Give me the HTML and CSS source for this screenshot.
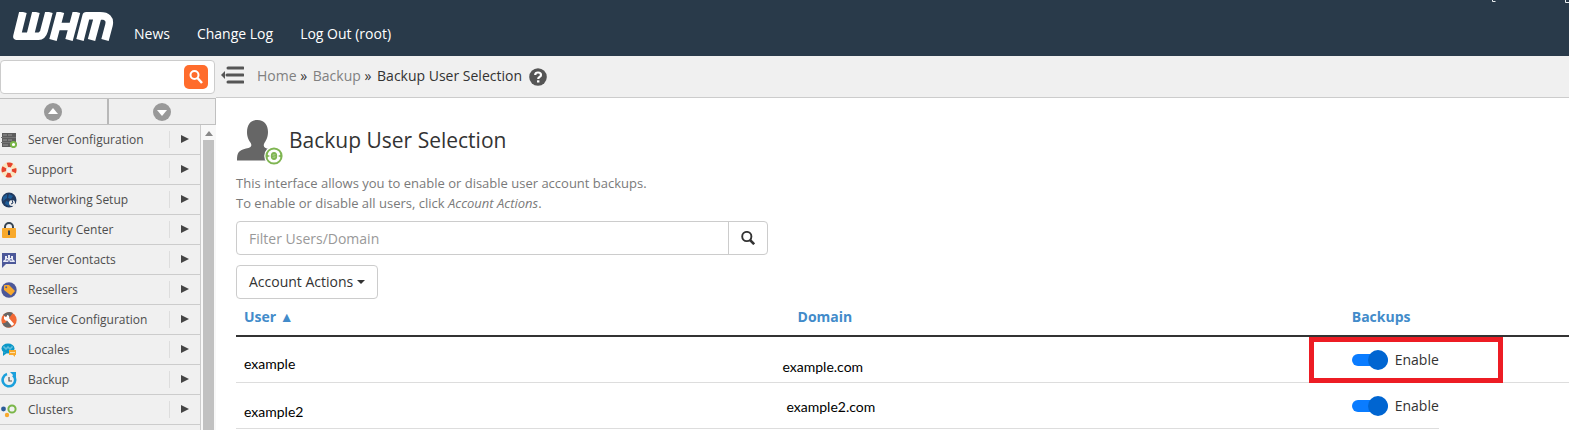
FILE: index.html
```html
<!DOCTYPE html>
<html lang="en">
<head>
<meta charset="utf-8">
<title>Backup User Selection</title>
<link rel="stylesheet" href="styles.css">
</head>
<body>
<header class="topbar">
  <svg class="logo" viewBox="0 0 102 30" role="img" aria-label="WHM" fill="none" stroke="#fff" stroke-width="7.600" stroke-linejoin="round">
    <path d="M11 0 5 24.200H26.500Q30.500 24.200 32 19L37 0M24 0 18 24.200"/>
    <path d="M48.500 0 41 28M64.500 0 57 28M45 14.500H61"/>
    <path d="M68 28 74.200 3.800H88Q99 3.800 97 13L93 28M86 4 79.500 28"/>
  </svg>
  <nav class="topnav">
    <a href="#">News</a>
    <a href="#">Change Log</a>
    <a href="#">Log Out (root)</a>
  </nav>
  <svg class="topbar-marks" viewBox="0 0 78 3" aria-hidden="true"><path d="M1.500 0V1.500H4.500M74.500 0V2.500H78" fill="none" stroke="#e8ecef"/></svg>
</header>
<div class="shell">
  <aside class="sidebar">
    <form class="quickfind">
      <input class="quickfind-input" type="text" aria-label="Search menu">
      <button class="quickfind-btn" type="button" aria-label="Search">
        <svg width="16" height="16" viewBox="0 0 16 16" fill="none" stroke="#fff"><circle cx="6.500" cy="6" r="4" stroke-width="2"/><path d="m9.500 9 4.500 5" stroke-width="2.500"/></svg>
      </button>
    </form>
    <div class="expanders">
      <button type="button" aria-label="Collapse all"><svg width="18" height="18" viewBox="0 0 18 18"><circle cx="9" cy="9" r="9" fill="#999"/><path d="m9 5 5 6H4z" fill="#fff"/></svg></button>
      <button type="button" aria-label="Expand all"><svg width="18" height="18" viewBox="0 0 18 18"><circle cx="9" cy="9" r="9" fill="#999"/><path d="m9 13 5-6H4z" fill="#fff"/></svg></button>
    </div>
    <div class="menu-wrap">
      <ul class="menu">
        <li><svg viewBox="0 0 16 16"><path d="M1 1h14v4H1zM1 6h14v4H1zM1 11h14v4H1z" fill="#5d5d5d"/><path d="M0 5.500h15M0 10.500h15" stroke="#777"/><path d="M2 3h4m1 0h4M2 8h4m1 0h4M2 13h5" stroke="#999"/><circle cx="12.500" cy="12.500" r="2.600" fill="#fff" stroke="#7ab648" stroke-width="2"/></svg><a href="#">Server Configuration</a><i></i></li>
        <li><svg viewBox="0 0 16 16"><circle cx="8" cy="8" r="5.200" fill="none" stroke="#fbe6c0" stroke-width="5"/><circle cx="8" cy="8" r="5.200" fill="none" stroke="#e5432d" stroke-width="4.600" stroke-dasharray="4.600 3.568" stroke-dashoffset="2.300"/></svg><a href="#">Support</a><i></i></li>
        <li><svg viewBox="0 0 16 16"><circle cx="8" cy="8" r="7.500" fill="#203a60"/><path d="M2 5 6 2v4l-4 3zM8 2l4 2-2 3-3-1zM5 9l3 1v4l-4-2z" fill="#1e5d98"/><circle cx="11" cy="11" r="3" fill="#eee"/><path d="m11 11 4 4" stroke="#eee" stroke-width="2"/><path d="m11 8 1 3-2 1" fill="none" stroke="#203a60"/></svg><a href="#">Networking Setup</a><i></i></li>
        <li><svg viewBox="0 0 16 16"><path d="M4 7V5a4 4 0 0 1 8 0v2" fill="none" stroke="#344352" stroke-width="2"/><rect x="1" y="6" width="14" height="10" rx="1" fill="#f8a92c"/><path d="M8 8.500v4.500M7 9.500h2" stroke="#344352" stroke-width="2"/></svg><a href="#">Security Center</a><i></i></li>
        <li><svg viewBox="0 0 16 16"><path d="M1 1h14v11H5l-4 4z" fill="#4c5899"/><path d="M2 10q0-2 2-2.500V4h2v2h1V3h2v3h1V4h2v3.500q2 .5 2 2.500z" fill="#e8eaf5"/><path d="m5 9 1-2 2 3 2-3 1 2" fill="none" stroke="#4c5899" stroke-width=".7"/></svg><a href="#">Server Contacts</a><i></i></li>
        <li><svg viewBox="0 0 16 16"><circle cx="8" cy="8" r="7.700" fill="#4c5899"/><path d="M3 4q0-1 1-1h4l6 6-4 4.500-7-5.500z" fill="#f8a92c"/><circle cx="5.200" cy="5.200" r="1" fill="#4c5899"/></svg><a href="#">Resellers</a><i></i></li>
        <li><svg viewBox="0 0 16 16"><circle cx="8" cy="8" r="7.700" fill="#f26935"/><path d="M2 3a8 8 0 0 1 10-2L8 6z" fill="#666"/><path d="M1 11q4 1 5-3l5 6q-4 3-8 0z" fill="#666"/><path d="m5 5 7 8" stroke="#fff" stroke-width="3"/><path d="M3 7V4l3 2V3q3 0 2 4l-3 2z" fill="#fff"/></svg><a href="#">Service Configuration</a><i></i></li>
        <li><svg viewBox="0 0 16 16"><ellipse cx="7" cy="6.500" rx="6.500" ry="5" fill="#0b98c8"/><path d="m2 10 0 4 4-3z" fill="#0b98c8"/><path d="M2 5h2v2h2V5h2v2h2V5h2" fill="none" stroke="#bee6f3" stroke-width=".6"/><path d="M8 8h7v5h-1v2l-2-2H8z" fill="#f8a92c"/><path d="M9 10.500h5" stroke="#fce0af"/></svg><a href="#">Locales</a><i></i></li>
        <li><svg viewBox="0 0 16 16"><path d="M6 2a6.300 6.300 0 1 0 6 1.200" fill="none" stroke="#1ba0dc" stroke-width="2.600"/><path d="M9 0h6v6z" fill="#1ba0dc"/><path d="M8 5v4h3" fill="none" stroke="#555" stroke-width="1.200"/></svg><a href="#">Backup</a><i></i></li>
        <li><svg viewBox="0 0 16 16"><circle cx="2.500" cy="7" r="2.400" fill="#2c5c99"/><circle cx="11" cy="7" r="3.600" fill="none" stroke="#7ab648" stroke-width="2"/><circle cx="6" cy="13" r="2.200" fill="#f8a92c"/></svg><a href="#">Clusters</a><i></i></li>
        <li></li>
      </ul>
      <div class="scrollbar" aria-hidden="true"><svg width="8" height="5" viewBox="0 0 8 5"><path d="m4 0 4 5H0z" fill="#888"/></svg><div class="thumb"></div></div>
    </div>
  </aside>
  <main class="main">
    <div class="crumbbar">
      <button class="toggle-menu" type="button" aria-label="Toggle menu"><svg width="23" height="18" viewBox="0 0 23 18"><path d="M0 9l4-4v8z" fill="#555"/><path d="M7 2h15M6 9h16M7 16h15" stroke="#555" stroke-width="3" stroke-linecap="round"/></svg></button>
      <nav class="crumbs" aria-label="Breadcrumb"><a href="#">Home</a> » <a class="step" href="#">Backup</a> » <span class="step">Backup User Selection</span></nav>
      <svg class="help" width="18" height="18" viewBox="0 0 18 18" role="img" aria-label="Help"><circle cx="9" cy="9" r="8.800" fill="#555"/><path d="M6.200 7Q6.200 4.500 9 4.500 12 4.500 12 6.900 12 8.200 10.500 8.900 9.200 9.500 9.200 11" fill="none" stroke="#fff" stroke-width="2.200"/><path d="M8 12.300h2.400v2.200H8z" fill="#fff"/></svg>
    </div>
    <div class="content">
      <div class="page-title">
        <svg width="48" height="46" viewBox="0 0 48 46" aria-hidden="true"><path d="M21.500 0C28.500 0 32 5 32 12c0 6-2.500 9-4 12-1 3 1 4 5 5 7 2 8 4 8 11.500H1C1 32 3 30.500 10 28.500c5-1 6-2 5-5-2-3-4-6-4-11.500C11 5 14.500 0 21.500 0z" fill="#666"/><circle cx="38" cy="36" r="9.800" fill="#fff"/><circle cx="38" cy="36" r="7.600" fill="none" stroke="#7fb552" stroke-width="2"/><path d="m30 34 4 2-4 2zM46 34l-4 2 4 2z" fill="#7fb552"/><ellipse cx="38" cy="36" rx="3.200" ry="4" fill="#7fb552"/><path d="M39.500 34.500h-2.500V36h2v1.500h-2.500" fill="none" stroke="#b5d49b" stroke-width=".6"/></svg>
        <h1>Backup User Selection</h1>
      </div>
      <p class="intro">This interface allows you to enable or disable user account backups.<br>To enable or disable all users, click <em>Account Actions</em>.</p>
      <form class="filter">
        <input type="text" placeholder="Filter Users/Domain" aria-label="Filter Users/Domain">
        <button type="button" aria-label="Filter"><svg width="14" height="14" viewBox="0 0 14 14" fill="none" stroke="#333"><circle cx="5.800" cy="5.500" r="4.600" stroke-width="1.900"/><path d="m9 9 4.200 4.200" stroke-width="2.600"/></svg></button>
      </form>
      <button class="actions" type="button">Account Actions <span class="caret"></span></button>
      <table class="users">
        <thead><tr><th class="col-user" scope="col">User ▲</th><th class="col-domain" scope="col">Domain</th><th scope="col">Backups</th></tr></thead>
        <tbody>
          <tr><td class="user">example</td><td class="domain">example.com</td><td class="state"><div class="highlight"></div><label><input type="checkbox" role="switch" checked>Enable</label></td></tr>
          <tr class="last"><td class="user">example2</td><td class="domain">example2.com</td><td class="state"><label><input type="checkbox" role="switch" checked>Enable</label></td></tr>
        </tbody>
      </table>
    </div>
  </main>
</div>
</body>
</html>
```
FILE: styles.css
```css
* { box-sizing: border-box; }
body {
  margin: 0;
  height: 100vh;
  overflow: hidden;
  display: flex;
  flex-direction: column;
  font: 14px/20px "Open Sans", "Noto Sans", sans-serif;
  color: #333;
  background: #fff;
}
a { color: inherit; text-decoration: none; }
button { font: inherit; color: inherit; cursor: pointer; padding: 0; }

.topbar {
  flex: none;
  height: 56px;
  display: flex;
  align-items: flex-start;
  padding-left: 12px;
  background: #293a4a;
  color: #fff;
}
.logo { width: 102px; height: 30px; margin-top: 12px; }
.topnav { display: flex; gap: 27px; margin: 24px 0 0 20px; }
.topbar-marks { width: 78px; height: 3px; margin-left: auto; }

.shell { flex: 1; min-height: 0; display: flex; }
.sidebar {
  flex: none;
  width: 216px;
  display: flex;
  flex-direction: column;
  background: #f0f0f0;
}
.quickfind {
  flex: none;
  display: flex;
  align-items: center;
  height: 34px;
  margin: 4px 1px 4px 0;
  padding-right: 6px;
  background: #fff;
  border: 1px solid #ccc;
  border-radius: 4px;
}
.quickfind-input { flex: 1; min-width: 0; border: 0; outline: 0; background: none; }
.quickfind-btn {
  display: grid;
  place-items: center;
  width: 24px;
  height: 24px;
  border: 0;
  border-radius: 5px;
  background: #ff6c2c;
}
.expanders {
  flex: none;
  display: flex;
  height: 27px;
  border: 1px solid #c0c0c0;
  border-left: 0;
}
.expanders button {
  flex: 1;
  display: grid;
  place-items: center;
  border: 0;
  background: #efefef;
}
.expanders button + button { border-left: 2px solid #b8b8b8; }
.menu-wrap { flex: 1; min-height: 0; display: flex; background: #f8f8f8; }
.menu {
  flex: 1;
  margin: 0;
  padding: 0;
  list-style: none;
  overflow: hidden;
  font-size: 12px;
  color: #4d4d4d;
  background: #f0f0f0;
  border-right: 1px solid #ccc;
}
.menu li {
  display: flex;
  align-items: center;
  height: 30px;
  padding-right: 11px;
  border-bottom: 1px solid #ccc;
}
.menu svg { width: 16px; height: 16px; margin: 0 11px 0 1px; }
.menu a { flex: 1; }
.menu i {
  display: flex;
  align-items: center;
  height: 17px;
  padding-left: 11px;
  border-left: 1px solid #ddd;
}
.menu i::before {
  content: "";
  margin-bottom: 1px;
  border: 4px solid transparent;
  border-left: 8px solid #444;
  border-right: 0;
}
.scrollbar {
  width: 15px;
  display: flex;
  flex-direction: column;
  align-items: center;
  gap: 4px;
  padding-top: 6px;
}
.thumb { flex: 1; width: 11px; background: #c1c1c1; }

.main { flex: 1; min-width: 0; }
.crumbbar {
  display: flex;
  align-items: center;
  height: 42px;
  padding-left: 5px;
  background: #f0f0f0;
  border-bottom: 1px solid #ccc;
}
.toggle-menu { display: flex; border: 0; background: none; margin: 0 13px 4px 0; }
.crumbs { margin: 0 7px 2px 0; }
.crumbs a { color: #808080; }
.crumbs .step { margin-left: 2px; }
.help { margin-top: 1px; }

.content { padding: 22px 0 0 20px; }
.page-title { display: flex; gap: 5px; height: 53px; }
h1 { margin: 4px 0 0; font-size: 21px; line-height: 32px; font-weight: 400; }
.intro { margin: 0 0 8px; font-size: 13px; color: #7a7a7a; }
.filter {
  display: flex;
  width: 532px;
  max-width: 100%;
  height: 34px;
  border: 1px solid #ccc;
  border-radius: 4px;
}
.filter input {
  flex: 1;
  min-width: 0;
  padding: 2px 12px 0;
  border: 0;
  outline: 0;
  background: none;
  font: inherit;
}
.filter input::placeholder { color: #999; }
.filter button {
  display: grid;
  place-items: center;
  width: 39px;
  border: 0;
  border-left: 1px solid #ccc;
  background: none;
}
.actions {
  display: flex;
  align-items: center;
  gap: 4px;
  height: 34px;
  margin: 10px 0 0;
  padding: 0 12px;
  border: 1px solid #ccc;
  border-radius: 4px;
  background: #fff;
}
.caret { border: 4px solid transparent; border-top-color: #333; border-bottom: 0; }

.users { width: 100%; table-layout: fixed; border-collapse: separate; border-spacing: 0; }
.col-user { width: 40.4%; }
.col-domain { width: 42.7%; }
.users th {
  height: 38px;
  padding: 0 8px;
  text-align: left;
  font-weight: 700;
  color: #428bca;
  border-bottom: 2px solid #333;
}
.users .col-domain { padding-left: 23px; }
.users td {
  height: 46px;
  padding: 0 8px;
  vertical-align: top;
  border-bottom: 1px solid #ddd;
}
.users .user,
.users .domain { font-family: Lato, "Open Sans", sans-serif; color: #000; }
.users .user { padding-top: 17px; }
.users .domain { padding-top: 20px; }
.users .last .user { padding-top: 19px; }
.users .last .domain { padding: 14px 12px 0; }
.users .state { position: relative; padding-top: 13px; }
.state label { display: flex; align-items: center; gap: 7px; }
.state input {
  appearance: none;
  flex: none;
  display: flex;
  justify-content: flex-end;
  align-items: center;
  width: 36px;
  height: 12px;
  margin: 0;
  border-radius: 6px;
  background: #0a7cff;
}
.state input::before {
  content: "";
  width: 20px;
  height: 20px;
  border-radius: 50%;
  background: #0065d1;
}
.users .last .state {
  border-bottom: 0;
  background: linear-gradient(#ddd, #ddd) left bottom / 95px 1px no-repeat;
}
.highlight {
  position: absolute;
  top: 0;
  left: -35px;
  width: 194px;
  height: 46px;
  border: 5px solid #ed1c24;
}
```
